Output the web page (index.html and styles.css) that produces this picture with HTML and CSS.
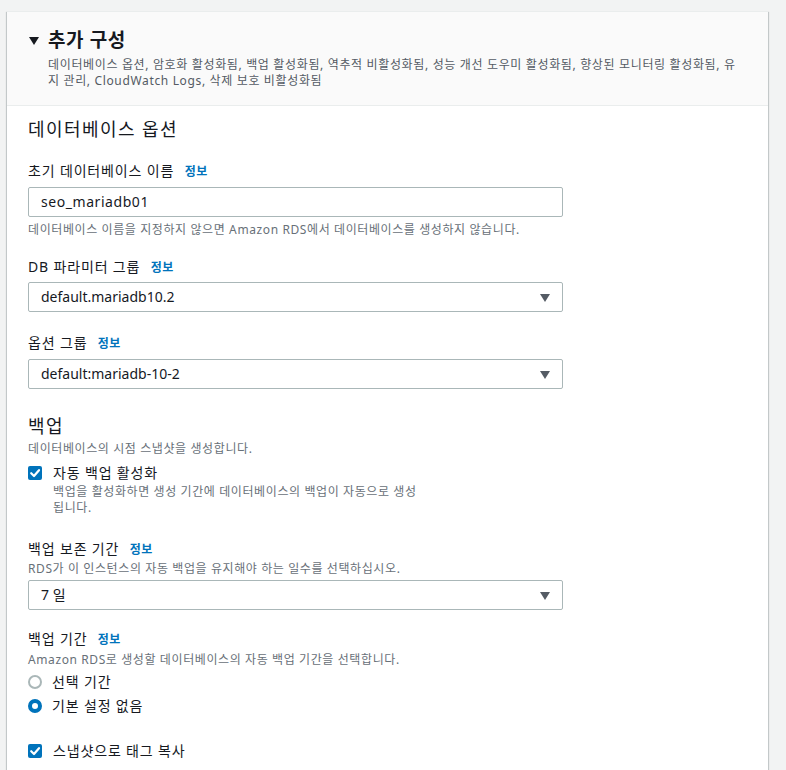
FILE: index.html
```html
<!DOCTYPE html>
<html lang="ko">
<head>
<meta charset="utf-8">
<link rel="stylesheet" href="styles.css">
</head>
<body>
<div class="card">
  <div class="card-header">
    <div class="title-row">
      <span class="caret"></span>
      <h2 class="title">추가 구성</h2>
    </div>
    <p class="header-desc">데이터베이스 옵션, 암호화 활성화됨, 백업 활성화됨, 역추적 비활성화됨, 성능 개선 도우미 활성화됨, 향상된 모니터링 활성화됨, 유지 관리, CloudWatch Logs, 삭제 보호 비활성화됨</p>
  </div>
  <div class="card-body">
    <h3 class="section-title">데이터베이스 옵션</h3>

    <div class="field f-first">
      <div class="label">초기 데이터베이스 이름 <a class="info">정보</a></div>
      <div class="input in-first">seo_mariadb01</div>
      <div class="hint hint-after">데이터베이스 이름을 지정하지 않으면 Amazon RDS에서 데이터베이스를 생성하지 않습니다.</div>
    </div>

    <div class="field f-db">
      <div class="label">DB 파라미터 그룹 <a class="info">정보</a></div>
      <div class="input select in-db">default.mariadb10.2<span class="arrow"></span></div>
    </div>

    <div class="field f-opt">
      <div class="label">옵션 그룹 <a class="info">정보</a></div>
      <div class="input select in-opt">default:mariadb-10-2<span class="arrow"></span></div>
    </div>

    <h3 class="section-title backup">백업</h3>
    <div class="hint backup-desc">데이터베이스의 시점 스냅샷을 생성합니다.</div>
    <div class="check-row cr-first">
      <span class="checkbox"><svg viewBox="0 0 14 14" width="14" height="14"><path d="M3.2 7.2 L6 10 L11 4.2" fill="none" stroke="#fff" stroke-width="2.2" stroke-linecap="round" stroke-linejoin="round"/></svg></span>
      <div>
        <div class="check-label">자동 백업 활성화</div>
        <div class="hint sub">백업을 활성화하면 생성 기간에 데이터베이스의 백업이 자동으로 생성<br>됩니다.</div>
      </div>
    </div>

    <div class="field f-retention">
      <div class="label">백업 보존 기간 <a class="info">정보</a></div>
      <div class="hint">RDS가 이 인스턴스의 자동 백업을 유지해야 하는 일수를 선택하십시오.</div>
      <div class="input select sel-gap">7 일<span class="arrow"></span></div>
    </div>

    <div class="field f-window">
      <div class="label">백업 기간 <a class="info">정보</a></div>
      <div class="hint hint-tight">Amazon RDS로 생성할 데이터베이스의 자동 백업 기간을 선택합니다.</div>
      <div class="radio-row r-first"><span class="radio"></span><span class="check-label">선택 기간</span></div>
      <div class="radio-row r-next"><span class="radio on"></span><span class="check-label">기본 설정 없음</span></div>
    </div>

    <div class="check-row cr-last">
      <span class="checkbox"><svg viewBox="0 0 14 14" width="14" height="14"><path d="M3.2 7.2 L6 10 L11 4.2" fill="none" stroke="#fff" stroke-width="2.2" stroke-linecap="round" stroke-linejoin="round"/></svg></span>
      <div class="check-label">스냅샷으로 태그 복사</div>
    </div>
  </div>
</div>
</body>
</html>
```
FILE: styles.css
```css
html, body {
  margin: 0;
  padding: 0;
}
body {
  background: #f2f3f3;
  font-family: "Noto Sans", "Noto Sans CJK KR", sans-serif;
  color: #16191f;
  font-size: 14px;
  line-height: 22px;
  height: 770px;
  overflow: hidden;
}
.card {
  margin: 11px 0 0 7px;
  width: 761px;
  background: #fff;
  border-top: 1px solid #eaeded;
  box-shadow: 0 1px 1px 0 rgba(0,28,36,.3), 1px 1px 1px 0 rgba(0,28,36,.15), -1px 1px 1px 0 rgba(0,28,36,.15);
}
.card-header {
  background: #fafafa;
  border-bottom: 1px solid #eaeded;
  padding: 17px 22px 16px 22px;
}
.title-row {
  display: flex;
  align-items: center;
}
.caret {
  width: 0;
  height: 0;
  border-left: 5px solid transparent;
  border-right: 5px solid transparent;
  border-top: 8px solid #16191f;
  margin-right: 9px;
  margin-top: 1px;
}
.title {
  margin: 0;
  font-size: 19px;
  line-height: 22px;
  font-weight: 700;
  letter-spacing: 0.6px;
}
.header-desc {
  margin: 6px 0 0 19px;
  font-size: 12px;
  line-height: 16px;
  color: #545b64;
  letter-spacing: 0.65px;
}
.card-body {
  padding: 12px 20px 40px 21px;
  display: flex;
  flex-direction: column;
  align-items: flex-start;
}
.section-title {
  margin: 0;
  font-size: 18px;
  line-height: 22px;
  font-weight: 400;
  letter-spacing: 0.08em;
}
.field {
  display: flex;
  flex-direction: column;
  align-items: flex-start;
}
.f-first { margin-top: 20px; }
.f-db { margin-top: 18px; }
.f-opt { margin-top: 20px; }
.f-retention { margin-top: 22px; }
.f-window { margin-top: 18px; }
.label {
  font-size: 14px;
  line-height: 22px;
  letter-spacing: 0.06em;
}
.info {
  color: #0073bb;
  font-size: 12px;
  font-weight: 700;
  margin-left: 6px;
  letter-spacing: 0.04em;
}
.input {
  margin-top: 5px;
  box-sizing: border-box;
  width: 535px;
  height: 30px;
  border: 1px solid #aab7b8;
  border-radius: 2px;
  padding: 0 12px;
  font-size: 14px;
  line-height: 28px;
  position: relative;
  background: #fff;
}
.in-first { margin-top: 4px; letter-spacing: 0.04em; }
.in-db { margin-top: 3px; }
.in-opt { margin-top: 4px; }
.sel-gap { margin-top: 3px; }
.arrow {
  position: absolute;
  right: 12px;
  top: 11px;
  width: 0;
  height: 0;
  border-left: 5px solid transparent;
  border-right: 5px solid transparent;
  border-top: 8px solid #545b64;
}
.hint {
  font-size: 12px;
  line-height: 16px;
  color: #687078;
  letter-spacing: 0.05em;
}
.hint-after { margin-top: 5px; }
.hint-tight { margin-top: 1px; }
.backup { margin-top: 26px; }
.backup-desc { margin-top: 4px; }
.check-row {
  display: flex;
  align-items: flex-start;
}
.cr-first { margin-top: 5px; }
.cr-last { margin-top: 23px; }
.checkbox {
  width: 14px;
  height: 14px;
  border-radius: 2px;
  background: #0073bb;
  margin: 4px 11px 0 0;
  flex: none;
  display: flex;
}
.check-label {
  font-size: 14px;
  line-height: 22px;
  letter-spacing: 0.06em;
}
.sub { color: #687078; }
.radio-row {
  display: flex;
  align-items: center;
}
.r-first { margin-top: 3px; }
.r-next { margin-top: 2px; }
.radio {
  box-sizing: border-box;
  width: 14px;
  height: 14px;
  border-radius: 50%;
  border: 2px solid #aab7b8;
  background: #fff;
  margin-right: 10px;
  flex: none;
}
.radio.on {
  border: 4px solid #0073bb;
}
```
